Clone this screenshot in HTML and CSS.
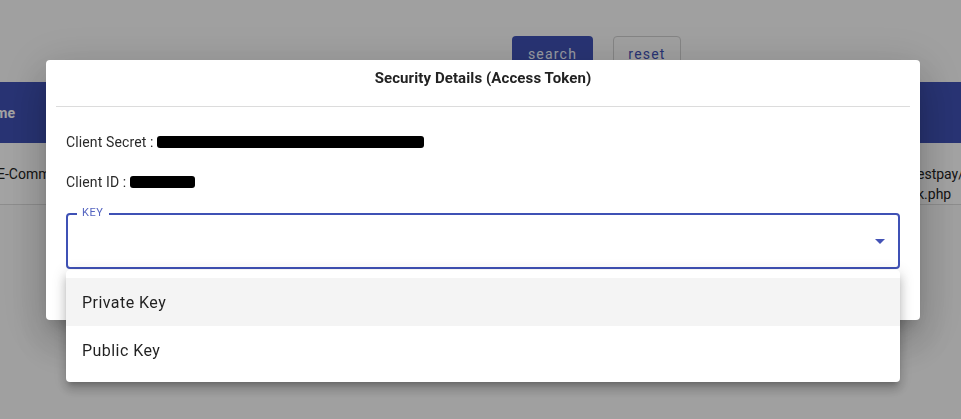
FILE: index.html
```html
<!DOCTYPE html>
<html>
<head>
<meta charset="utf-8">
<link rel="stylesheet" href="styles.css">
</head>
<body>
<div class="page">
  <div class="toolbar">
    <button class="btn btn-primary">search</button>
    <button class="btn btn-outline">reset</button>
  </div>
  <div class="table">
    <div class="thead">
      <div class="cell first">Name</div>
    </div>
    <div class="trow">
      <div class="cell first">E-Commerce</div>
      <div class="cell last">estpay/<br>k.php</div>
    </div>
  </div>
</div>

<div class="backdrop"></div>

<div class="dialog">
  <div class="dialog-title">Security Details (Access Token)</div>
  <div class="divider"></div>
  <div class="dialog-body">
    <div class="field-row">Client Secret :<span class="redact redact-long"></span></div>
    <div class="field-row">Client ID :<span class="redact redact-short"></span></div>
    <div class="select">
      <span class="select-label">KEY</span>
      <svg class="select-arrow" width="24" height="24" viewBox="0 0 24 24"><path d="M7 10l5 5 5-5z" fill="#4453b6"/></svg>
    </div>
  </div>
</div>

<div class="menu">
  <div class="menu-item active">Private Key</div>
  <div class="menu-item">Public Key</div>
</div>
</body>
</html>
```

FILE: styles.css
```css
html, body {
  margin: 0;
  padding: 0;
  width: 961px;
  height: 419px;
  overflow: hidden;
  font-family: Roboto, "Liberation Sans", sans-serif;
  background: #fff;
}

.page {
  width: 961px;
  height: 419px;
  background: #fbfbfb;
}

.toolbar {
  display: flex;
  align-items: flex-start;
  gap: 20px;
  padding: 36px 0 0 512px;
  height: 82px;
  box-sizing: border-box;
}

.btn {
  height: 36px;
  font-family: Roboto, "Liberation Sans", sans-serif;
  font-size: 14px;
  letter-spacing: 1.2px;
  border-radius: 4px;
  padding: 0;
  cursor: pointer;
}

.btn-primary {
  width: 81px;
  background: #3f51b5;
  color: #f0f3ff;
  border: none;
}

.btn-outline {
  width: 68px;
  background: transparent;
  color: #3f51b5;
  border: 1px solid #d0d0d0;
}

.table {
  overflow: hidden;
}

.thead {
  height: 61px;
  background: #3f51b5;
  display: flex;
  align-items: center;
}

.thead .cell {
  color: #fff;
  font-weight: 700;
  font-size: 14px;
}

.trow {
  height: 61px;
  background: #fff;
  border-bottom: 1px solid #ddd;
  display: flex;
  align-items: center;
  font-size: 14px;
  color: #222;
}

.thead .cell.first {
  margin-left: -22px;
}

.trow .cell.first {
  margin-left: -3px;
}

.cell.last {
  margin-left: auto;
  width: 44px;
  white-space: nowrap;
  overflow: hidden;
  line-height: 20px;
  margin-top: 20px;
}

.backdrop {
  position: fixed;
  inset: 0;
  background: rgba(0, 0, 0, 0.36);
}

.dialog {
  position: fixed;
  top: 60px;
  left: 46px;
  width: 874px;
  height: 260px;
  background: #fff;
  border-radius: 4px;
  box-shadow: 0 11px 15px -7px rgba(0,0,0,.2), 0 24px 38px 3px rgba(0,0,0,.14), 0 9px 46px 8px rgba(0,0,0,.12);
}

.dialog-title {
  padding-top: 9px;
  height: 46px;
  box-sizing: border-box;
  line-height: 18px;
  text-align: center;
  font-weight: 700;
  font-size: 15px;
  letter-spacing: 0.1px;
  color: #222;
}

.divider {
  margin: 0 10px;
  height: 1px;
  background: #dcdcdc;
}

.dialog-body {
  padding: 25px 20px 0;
}

.field-row {
  display: flex;
  align-items: center;
  gap: 4px;
  height: 20px;
  font-size: 14px;
  letter-spacing: 0.12px;
  color: #2a2a2a;
  margin-bottom: 20px;
}

.redact {
  display: inline-block;
  background: #000;
  height: 12px;
  border-radius: 3px;
}

.redact-long {
  width: 267px;
}

.redact-short {
  width: 65px;
}

.select {
  position: relative;
  margin-top: 21px;
  height: 56px;
  box-sizing: border-box;
  border: 2px solid #3f51b5;
  border-radius: 4px;
  display: flex;
  align-items: center;
  justify-content: flex-end;
  padding-right: 6px;
}

.select-label {
  position: absolute;
  top: -8px;
  left: 9px;
  padding: 0 5px;
  background: #fff;
  font-size: 11px;
  line-height: 12px;
  letter-spacing: 0.6px;
  color: #5464c0;
}

.select-arrow {
  display: block;
}

.menu {
  position: fixed;
  top: 270px;
  left: 66px;
  width: 834px;
  padding: 8px 0;
  background: #fff;
  border-radius: 4px;
  box-shadow: 0 5px 5px -3px rgba(0,0,0,.2), 0 8px 10px 1px rgba(0,0,0,.14), 0 3px 14px 2px rgba(0,0,0,.12);
}

.menu-item {
  height: 48px;
  padding: 0 16px;
  display: flex;
  align-items: center;
  font-size: 16px;
  color: rgba(0, 0, 0, 0.87);
  letter-spacing: 0.45px;
}

.menu-item.active {
  background: #f4f4f4;
}
```
